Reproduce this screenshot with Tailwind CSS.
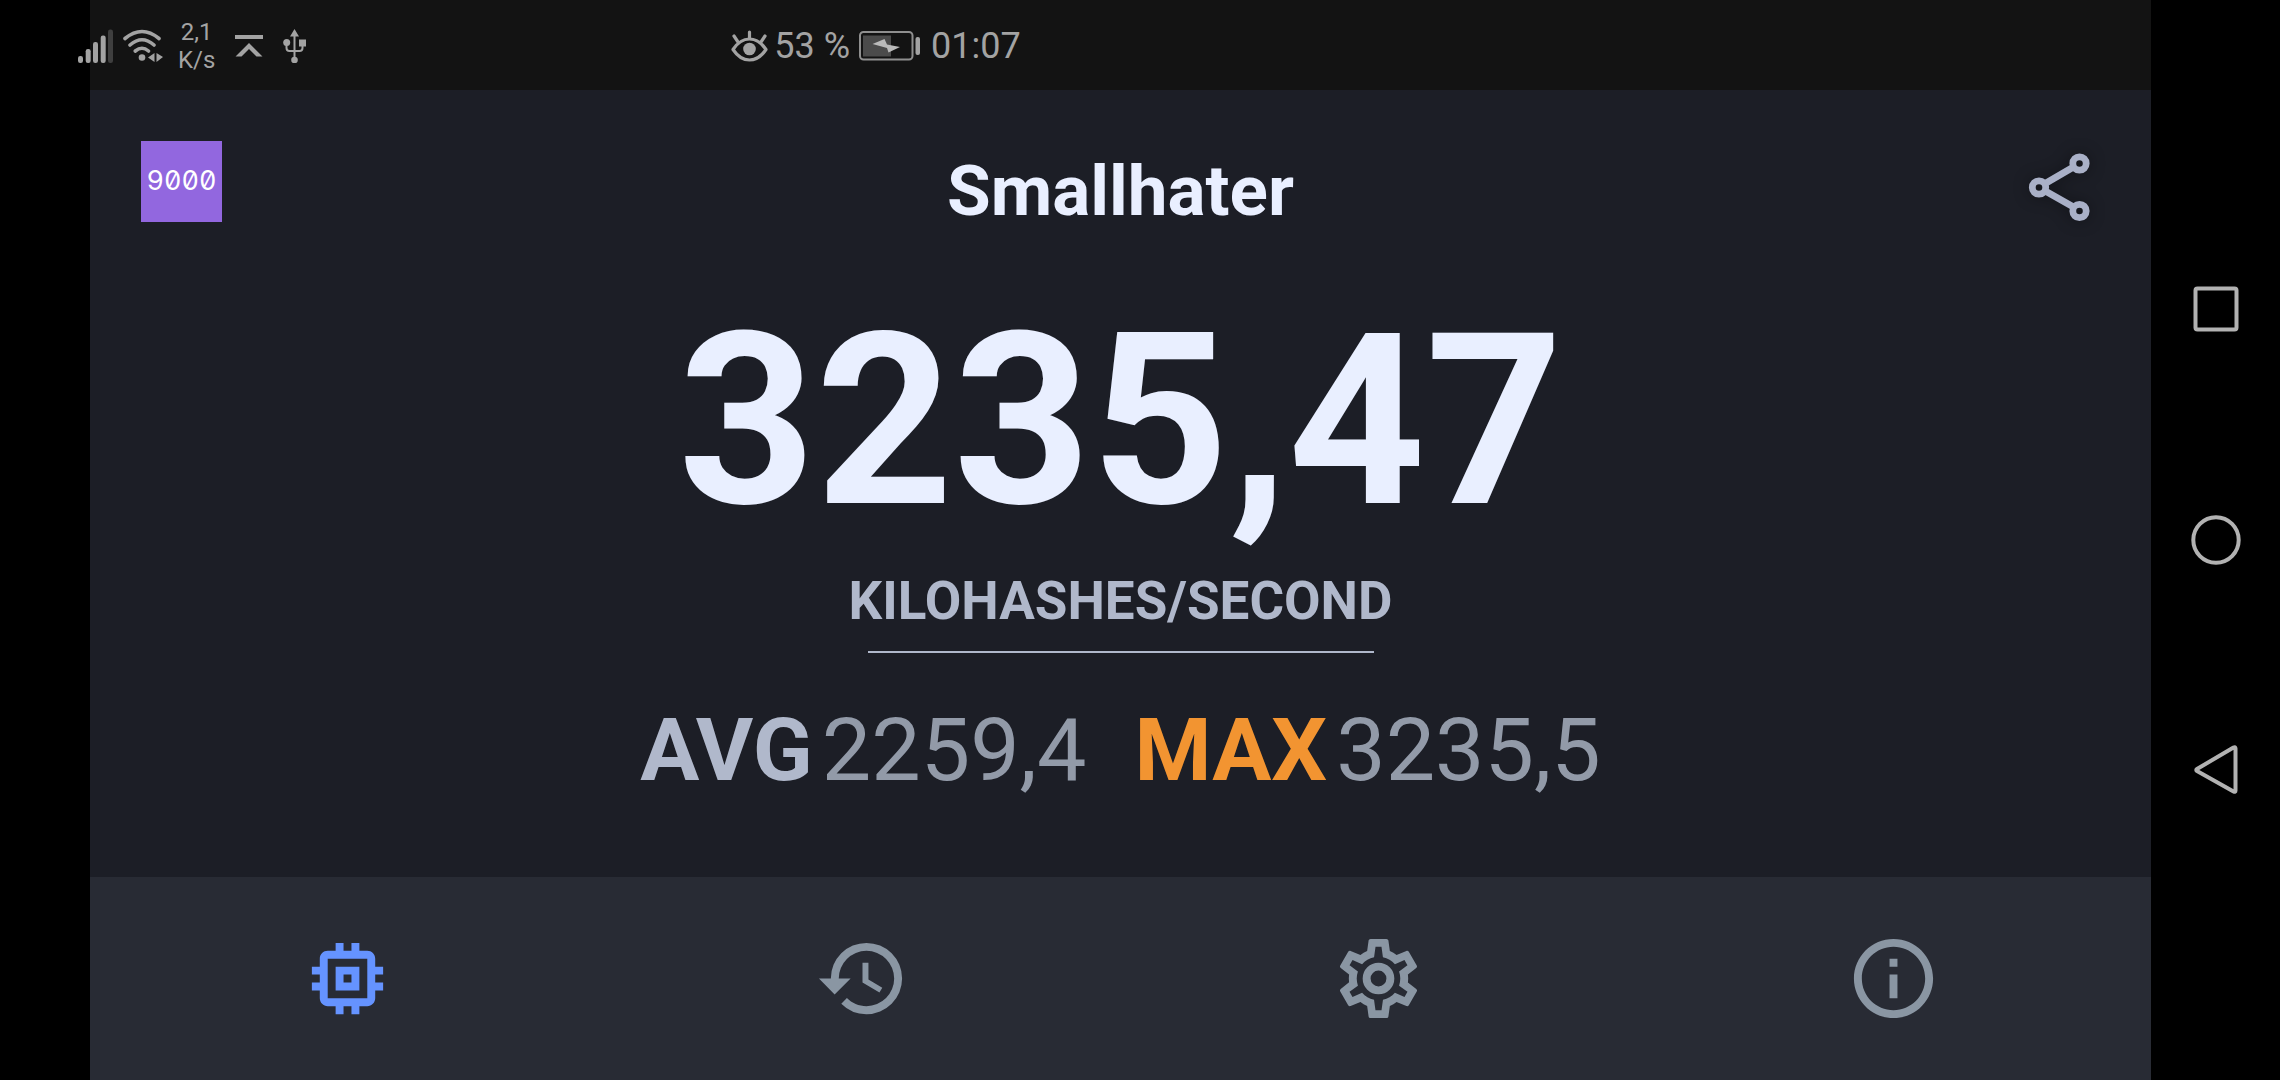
<!DOCTYPE html>
<html lang="en">
<head>
<meta charset="utf-8">
<meta name="viewport" content="width=device-width, initial-scale=1">
<title>Smallhater</title>
<script src="https://cdn.jsdelivr.net/npm/@tailwindcss/browser@4"></script>
</head>
<body class="flex min-h-screen bg-black pl-[90px] font-['Roboto',sans-serif]">
  <div class="flex min-w-0 flex-1 flex-col bg-[#1c1e26]">

    <!-- Status bar -->
    <header class="flex h-[90px] items-center bg-[#131313] pt-[2px] text-[#a3a3a3]">
      <div class="-ml-3 flex w-[31.7%] shrink-0 items-center">
        <svg class="h-[34px] w-[36px]" viewBox="0 0 36 34" fill="currentColor" aria-label="Signal">
          <rect x="0" y="27" width="5" height="7" rx="2.2"/><rect x="7.700" y="20" width="5" height="14" rx="2.200"/><rect x="15" y="13" width="5" height="21" rx="2.2"/><rect x="22.700" y="6.500" width="5" height="27.500" rx="2.200"/><rect x="30" y="0.500" width="5" height="33.500" rx="2.200" fill="#3f3f3f"/>
        </svg>
        <svg class="ml-2 h-[34px] w-[42px]" viewBox="0 0 42 34" fill="none" stroke="currentColor" stroke-width="3.600" stroke-linecap="round" aria-label="Wi-Fi">
          <path d="M3 9.500Q20 -4.500 37 9.500M8 16Q20 5.500 32 16M13.300 22Q20 16.500 26.500 22"/>
          <circle cx="20" cy="28.500" r="3.300" fill="currentColor" stroke="none"/>
          <path d="M32.500 24v9l-6.500-4.500zM34.500 24v9l6.500-5z" fill="currentColor" stroke="none"/>
        </svg>
        <p class="ml-[14px] text-center text-[24px] leading-[28px]">2,1<br>K/s</p>
        <svg class="ml-5 h-[24px] w-[28px]" viewBox="0 0 28 24" fill="currentColor" aria-label="Upload">
          <path d="M0 1h28v4H0zM14 9l13.500 13.500h-6L14 15 6.500 22.500h-6z"/>
        </svg>
        <svg class="ml-5 h-[34px] w-[24px]" viewBox="0 0 24 34" fill="none" stroke="currentColor" stroke-width="2" aria-label="USB">
          <path d="M11.500 5v26M3.500 14v5q0 3 3 3h10q3 0 3-3v-5"/>
          <path d="M11.500 0l4.500 7.500H7zM16 10.500h7v7h-7z" fill="currentColor" stroke="none"/>
          <circle cx="3.700" cy="13.500" r="3.500" fill="currentColor" stroke="none"/><circle cx="11.500" cy="31" r="3.300" fill="currentColor" stroke="none"/>
        </svg>
      </div>
      <div class="flex items-center text-[36px] leading-[44px]">
        <svg class="h-[32px] w-[37px]" viewBox="0 0 37 32" fill="none" stroke="currentColor" stroke-width="3.200" stroke-linecap="round" aria-label="Eye comfort">
          <path d="M2 19.500Q9 9 18.500 9T35 19.500Q28 30 18.500 30T2 19.500ZM18.500 2v6M3 6l4 6M34 6l-4 6" stroke-linejoin="round"/>
          <circle cx="18.500" cy="19" r="6.300" fill="currentColor" stroke="none"/>
        </svg>
        <span class="ml-[6px]">53 %</span>
        <svg class="ml-[9px] h-[30px] w-[62px]" viewBox="0 0 62 30" aria-label="Battery charging">
          <rect x="1" y="1" width="52.500" height="27.500" rx="3.500" fill="none" stroke="#8f8f8f" stroke-width="2"/>
          <rect x="4" y="4.500" width="28" height="21" fill="#4b4b4b"/>
          <path d="M13.500 13L25.500 8L28 13.500L41 16L29.500 21.500L28 17Z" fill="#bababa"/>
          <rect x="56.500" y="6" width="4.500" height="18" rx="2" fill="#a3a3a3"/>
        </svg>
        <time class="ml-[10px]">01:07</time>
      </div>
    </header>

    <main class="flex flex-1 flex-col items-center pt-[51px]">
      <div class="flex w-full items-start justify-between px-[51px]">
        <div class="flex size-[81px] items-center justify-center bg-[#9267df] font-['Inter',sans-serif] text-[27px] tabular-nums slashed-zero text-white">9000</div>
        <h1 class="text-[71px] font-bold leading-[100px] text-[#e9efff]">Smallhater</h1>
        <button class="flex h-[91px] w-[81px] items-center justify-center" aria-label="Share">
          <svg class="h-[80px] w-[81px] overflow-visible drop-shadow-[0_0_8px_rgba(0,0,0,0.4)]" viewBox="0 0 81 80" fill="none" stroke="#a9b0c7" stroke-width="6.800">
            <path d="M54.500 20L24.500 37.500M54.500 60L24.500 43"/>
            <circle cx="60.500" cy="16.500" r="6.700"/><circle cx="20" cy="40.500" r="6.700"/><circle cx="60.500" cy="64" r="6.700"/>
          </svg>
        </button>
      </div>

      <p class="mt-[60px] text-[240px] font-bold leading-[240px] text-[#e9efff]">3235,47</p>
      <p class="mt-7 text-[53px] font-bold leading-[64px] text-[#b0b8cb]">KILOHASHES/SECOND</p>
      <hr class="mt-[18px] w-[506px] border-t-2 border-[#b0b8cb]">
      <dl class="mt-[45px] flex gap-12 text-[88px] leading-[104px] text-[#929aa8]">
        <div class="flex gap-[9px]"><dt class="font-bold text-[#b0b8cb]">AVG</dt><dd>2259,4</dd></div>
        <div class="flex gap-[9px]"><dt class="font-bold text-[#f29431]">MAX</dt><dd>3235,5</dd></div>
      </dl>
    </main>

    <nav class="grid h-[203px] grid-cols-4 bg-[#282b34] text-[#8a96a3]" aria-label="Main">
      <button class="flex items-center justify-center text-[#6593ff]" aria-label="Miner">
        <svg class="size-[95px]" viewBox="0 0 24 24" fill="currentColor"><path d="M15 9H9v6h6V9zm-2 4h-2v-2h2v2zm8-2V9h-2V7c0-1.100-.9-2-2-2h-2V3h-2v2h-2V3H9v2H7c-1.100 0-2 .9-2 2v2H3v2h2v2H3v2h2v2c0 1.100.9 2 2 2h2v2h2v-2h2v2h2v-2h2c1.100 0 2-.9 2-2v-2h2v-2h-2v-2h2zm-4 6H7V7h10v10z"/></svg>
      </button>
      <button class="flex items-center justify-center" aria-label="History">
        <svg class="size-[95px]" viewBox="0 0 24 24" fill="currentColor"><path d="M13.500 8H12v5l4.280 2.540.72-1.210-3.500-2.080V8M13 3a9 9 0 0 0-9 9H1l3.960 4.030L9 12H6a7 7 0 0 1 7-7 7 7 0 0 1 7 7 7 7 0 0 1-7 7c-1.930 0-3.680-.79-4.940-2.060l-1.420 1.420A8.896 8.896 0 0 0 13 21a9 9 0 0 0 9-9 9 9 0 0 0-9-9"/></svg>
      </button>
      <button class="flex items-center justify-center" aria-label="Settings">
        <svg class="size-[95px]" viewBox="0 0 24 24" fill="currentColor"><path d="M12,8A4,4 0 0,1 16,12A4,4 0 0,1 12,16A4,4 0 0,1 8,12A4,4 0 0,1 12,8M12,10A2,2 0 0,0 10,12A2,2 0 0,0 12,14A2,2 0 0,0 14,12A2,2 0 0,0 12,10M10,22C9.750,22 9.540,21.820 9.500,21.580L9.130,18.930C8.500,18.680 7.960,18.340 7.440,17.940L4.950,18.950C4.730,19.030 4.460,18.950 4.340,18.730L2.340,15.270C2.210,15.050 2.270,14.780 2.460,14.630L4.570,12.970L4.500,12L4.570,11L2.460,9.370C2.270,9.220 2.210,8.950 2.340,8.730L4.340,5.270C4.460,5.050 4.730,4.960 4.950,5.050L7.440,6.050C7.960,5.660 8.500,5.320 9.130,5.070L9.500,2.420C9.540,2.180 9.750,2 10,2H14C14.250,2 14.460,2.180 14.500,2.420L14.870,5.070C15.500,5.320 16.040,5.660 16.560,6.050L19.050,5.050C19.270,4.960 19.540,5.050 19.660,5.270L21.660,8.730C21.790,8.950 21.730,9.220 21.540,9.370L19.430,11L19.500,12L19.430,13L21.540,14.630C21.730,14.780 21.790,15.050 21.660,15.270L19.660,18.730C19.540,18.950 19.270,19.040 19.050,18.950L16.560,17.950C16.040,18.340 15.500,18.680 14.870,18.930L14.500,21.580C14.460,21.820 14.250,22 14,22H10M11.250,4L10.880,6.610C9.680,6.860 8.620,7.500 7.850,8.390L5.440,7.350L4.690,8.650L6.800,10.200C6.400,11.370 6.400,12.640 6.800,13.800L4.680,15.360L5.430,16.660L7.860,15.620C8.630,16.500 9.680,17.140 10.870,17.380L11.240,20H12.760L13.130,17.390C14.320,17.140 15.370,16.500 16.140,15.620L18.570,16.660L19.320,15.360L17.200,13.810C17.600,12.640 17.600,11.370 17.200,10.200L19.310,8.650L18.560,7.350L16.150,8.390C15.380,7.500 14.320,6.860 13.120,6.620L12.750,4H11.250Z"/></svg>
      </button>
      <button class="flex items-center justify-center" aria-label="Info">
        <svg class="size-[95px]" viewBox="0 0 24 24" fill="currentColor"><path d="M11 7h2v2h-2zm0 4h2v6h-2zm1-9C6.480 2 2 6.480 2 12s4.480 10 10 10 10-4.480 10-10S17.520 2 12 2zm0 18c-4.410 0-8-3.590-8-8s3.590-8 8-8 8 3.590 8 8-3.590 8-8 8z"/></svg>
      </button>
    </nav>
  </div>

  <!-- System navigation -->
  <nav class="flex w-[129px] shrink-0 flex-col items-center justify-center gap-[180px]" aria-label="System">
    <button class="size-[50px]" aria-label="Recents"><svg viewBox="0 0 50 50" fill="none" stroke="#b2b2b2" stroke-width="4"><rect x="4.500" y="3.500" width="41" height="41" rx="2"/></svg></button>
    <button class="size-[50px]" aria-label="Home"><svg viewBox="0 0 50 50" fill="none" stroke="#b2b2b2" stroke-width="4"><circle cx="25" cy="25" r="22.700"/></svg></button>
    <button class="size-[50px]" aria-label="Back"><svg viewBox="0 0 50 50" fill="none" stroke="#b2b2b2" stroke-width="4" stroke-linejoin="round"><path d="M44.500 3.500v42q0 2-2 1L6 26q-1.500-1 0-2L42.500 2.500q2-1 2 1z"/></svg></button>
  </nav>
</body>
</html>
